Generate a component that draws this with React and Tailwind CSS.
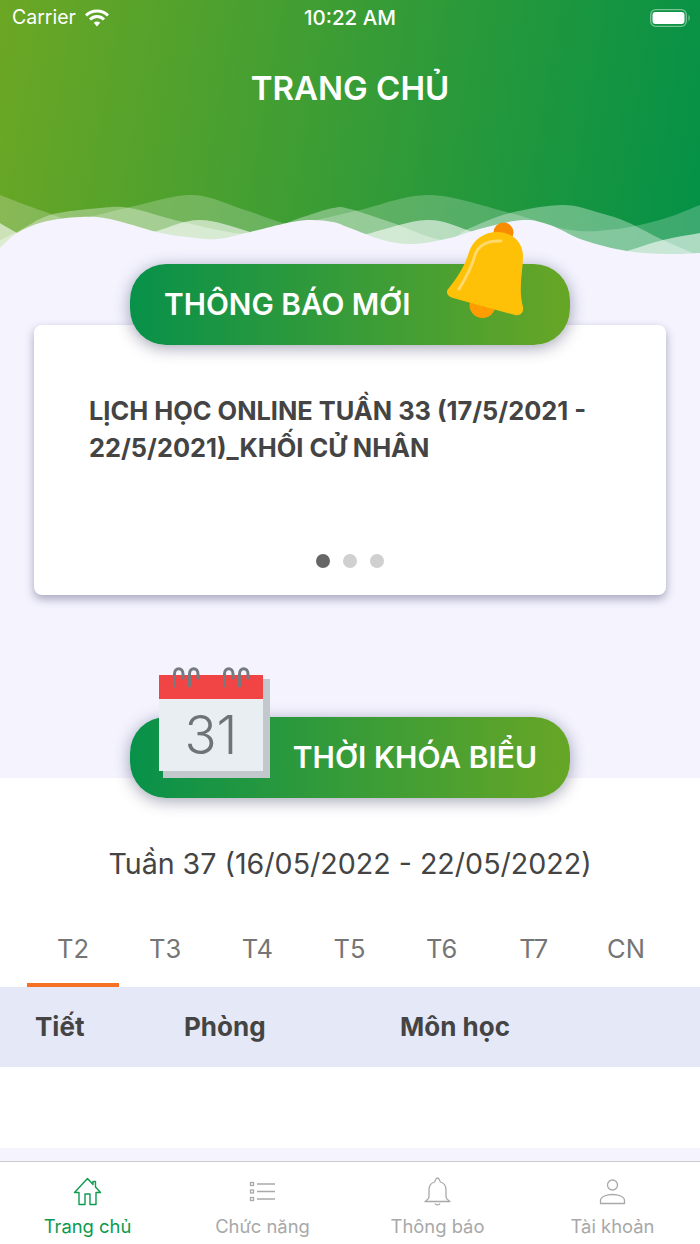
import React from "react";

function smooth(pts) {
  let d = `M${pts[0][0]},${pts[0][1]}`;
  for (let i = 0; i < pts.length - 1; i++) {
    const p0 = pts[i - 1] || pts[i];
    const p1 = pts[i];
    const p2 = pts[i + 1];
    const p3 = pts[i + 2] || p2;
    const c1 = [p1[0] + (p2[0] - p0[0]) / 6, p1[1] + (p2[1] - p0[1]) / 6];
    const c2 = [p2[0] - (p3[0] - p1[0]) / 6, p2[1] - (p3[1] - p1[1]) / 6];
    d += ` C${c1[0].toFixed(1)},${c1[1].toFixed(1)} ${c2[0].toFixed(1)},${c2[1].toFixed(1)} ${p2[0]},${p2[1]}`;
  }
  return d;
}
const closed = (pts, h = 264) => `${smooth(pts)} L${pts[pts.length - 1][0]},${h} L${pts[0][0]},${h} Z`;

const L1 = [[0,195],[40,210],[75,219],[130,207],[193,195],[245,210],[290,224],[325,218],[360,210],[430,195],[510,213],[570,230],[617,229],[663,219],[700,205]];
const L2 = [[-10,245],[17,232],[50,215],[100,208],[130,208],[183,222],[250,234],[297,219],[333,208],[350,209],[393,223],[443,240],[470,228],[510,213],[563,205],[600,213],[627,222],[663,240],[700,256]];
const L3 = [[0,223],[17,233],[60,258],[130,240],[157,231],[200,220],[250,232],[300,250],[363,235],[427,220],[473,232],[530,250],[600,258],[627,251],[663,240],[700,233]];
const MAIN = [[0,248],[17,233],[43,222],[80,217],[110,219],[157,232],[187,237],[217,239],[250,232],[287,223],[310,220],[333,222],[350,228],[383,240],[413,244],[450,238],[483,228],[523,220],[550,225],[583,240],[627,251],[667,254],[700,253]];

function Waves() {
  return (
    <svg className="absolute left-0 top-0" width="700" height="264" viewBox="0 0 700 264">
      <path d={closed(L1)} fill="#fff" fillOpacity="0.22" />
      <path d={closed(L2)} fill="#fff" fillOpacity="0.34" />
      <path d={closed(L3)} fill="#fff" fillOpacity="0.58" />
      <path d={closed(MAIN)} fill="#f4f3fe" />
    </svg>
  );
}

function Bell() {
  return (
    <svg className="absolute left-[315px] top-[-42px]" width="90" height="100" viewBox="0 0 90 100">
      <circle cx="58.5" cy="10.5" r="10" fill="#f88b00" />
      <circle cx="37.5" cy="83" r="13" fill="#ff9d00" />
      <path d="M4,66 C12,56 20,44 24,30 C28,17 40,10 52,10 C67,10 78,20 78,34 C78,50 73,66 78,85 C79,91 75,94 70,93 L8,76 C2,74 0,70 4,66Z" fill="#ffc107" />
      <path d="M14,67 C22,54 27,45 30,33 C33,24 42,18 56,19" fill="none" stroke="#ffda6b" strokeWidth="3" strokeLinecap="round" />
    </svg>
  );
}

function Calendar() {
  return (
    <svg className="absolute left-[29px] top-[-50px]" width="112" height="112" viewBox="0 0 112 112">
      <rect x="4" y="12" width="107" height="99" fill="#c3c8cc" />
      <rect x="0" y="8" width="104" height="96" fill="#e9eef2" />
      <rect x="0" y="8" width="104" height="24" fill="#f14444" />
      {[14, 29, 64, 79].map((x) => (
        <path key={x} d={`M${x + 1.5},19 V7 C${x + 1.5},0 ${x + 10},0 ${x + 10},7 V11`} fill="none" stroke="#757a7e" strokeWidth="3" strokeLinecap="round" />
      ))}
      <text x="52" y="87" textAnchor="middle" fontSize="53" fontWeight="300" fill="#6d7378" fontFamily="Inter, sans-serif">31</text>
    </svg>
  );
}

function StatusBar() {
  return (
    <div className="relative flex h-[36px] items-center justify-between pl-[12px] pr-[9px] text-[19.5px] leading-none text-white">
      <div className="flex items-center gap-[8px]">
        <span>Carrier</span>
        <svg width="26" height="18" viewBox="0 0 26 18">
          <g fill="none" stroke="#fff" strokeWidth="3">
            <path d="M2,6.5 C8,0.5 18,0.5 24,6.5" />
            <path d="M6,10.5 C10,6.5 16,6.5 20,10.5" />
          </g>
          <path d="M9.8,13.8 C11.6,12 14.4,12 16.2,13.8 L13,17.5Z" fill="#fff" />
        </svg>
      </div>
      <span className="absolute left-0 right-0 text-center text-[20.5px] font-medium">10:22 AM</span>
      <svg width="41" height="18" viewBox="0 0 41 18">
        <rect x="0.7" y="0.7" width="35.6" height="16.6" rx="5" fill="none" stroke="#fff" strokeOpacity="0.45" strokeWidth="1.3" />
        <rect x="2.5" y="3" width="32" height="12" rx="3" fill="#fff" />
        <path d="M38.5,6 C40,6.5 40,11.5 38.5,12Z" fill="#fff" fillOpacity="0.5" />
      </svg>
    </div>
  );
}

const tabIconGray = "#a9a9a9";

function HomeIcon() {
  return (
    <svg width="29" height="29" viewBox="0 0 29 29" fill="none" stroke="#0f9a50" strokeWidth="1.4" strokeLinejoin="round">
      <path d="M6,27.5 V15.5 H1.5 L14.5,1.5 L20,7.5 V4.5 H22.5 V10 L27.5,15.5 H23 V27.5 H17 V17 H12 V27.5 Z" />
    </svg>
  );
}
function ListIcon() {
  return (
    <svg width="29" height="29" viewBox="0 0 29 29" fill="none" stroke={tabIconGray} strokeWidth="1.3">
      <rect x="2.5" y="5.5" width="3" height="3" />
      <rect x="2.5" y="13" width="3" height="3" />
      <rect x="2.5" y="20.5" width="3" height="3" />
      <path d="M9,7 H27 M9,14.5 H27 M9,22 H27" />
    </svg>
  );
}
function BellIcon() {
  return (
    <svg width="29" height="29" viewBox="0 0 29 29" fill="none" stroke={tabIconGray} strokeWidth="1.3" strokeLinejoin="round">
      <path d="M14.5,1 C12.5,1 12.5,4 11.5,5 C8,6 6,9 6,13 V20 C6,22 4,23 2,24.5 H27 C25,23 23,22 23,20 V13 C23,9 21,6 17.5,5 C16.5,4 16.5,1 14.5,1 Z" />
      <path d="M12,26.5 C13,28.3 16,28.3 17,26.5" />
    </svg>
  );
}
function UserIcon() {
  return (
    <svg width="29" height="29" viewBox="0 0 29 29" fill="none" stroke={tabIconGray} strokeWidth="1.3">
      <circle cx="14.5" cy="8" r="5" />
      <path d="M2.5,26.5 V23.5 C2.5,19.5 9,17.5 14.5,17.5 C20,17.5 26.5,19.5 26.5,23.5 V26.5 Z" />
    </svg>
  );
}

const navItems = [
  { label: "Trang chủ", Icon: HomeIcon, active: true },
  { label: "Chức năng", Icon: ListIcon },
  { label: "Thông báo", Icon: BellIcon },
  { label: "Tài khoản", Icon: UserIcon },
];

const days = ["T2", "T3", "T4", "T5", "T6", "T7", "CN"];

export default function App() {
  return (
    <div className="flex h-[1244px] w-[700px] flex-col overflow-hidden bg-[#f4f3fe] font-['Inter',sans-serif]">
      <header className="relative h-[264px] shrink-0 bg-[linear-gradient(100deg,#6ca724_0%,#039147_100%)]">
        <Waves />
        <StatusBar />
        <h1 className="relative mt-[30px] text-center text-[33px] font-semibold leading-[44px] text-white">TRANG CHỦ</h1>
      </header>

      <section className="relative z-10 flex shrink-0 flex-col">
        <div className="relative z-10 mx-auto flex h-[81px] w-[440px] items-center rounded-[36px] bg-[linear-gradient(90deg,#08914a,#67a626)] pl-[34px] shadow-[0_3px_16px_rgba(50,50,90,0.45)]">
          <span className="text-[29.8px] font-semibold leading-none text-white">THÔNG BÁO MỚI</span>
          <Bell />
        </div>
        <div className="mx-[34px] mt-[-20px] flex h-[270px] flex-col rounded-lg bg-white px-[55px] pt-[67px] shadow-[0_4px_10px_rgba(50,50,90,0.4)]">
          <p className="text-[25.4px] font-bold leading-[37px] text-[#444444]">
            LỊCH HỌC ONLINE TUẦN 33 (17/5/2021 - 22/5/2021)_KHỐI CỬ NHÂN
          </p>
          <div className="mt-auto mb-[27px] flex justify-center gap-[13px]">
            <span className="h-[14px] w-[14px] rounded-full bg-[#666666]" />
            <span className="h-[14px] w-[14px] rounded-full bg-[#d0d0d0]" />
            <span className="h-[14px] w-[14px] rounded-full bg-[#d0d0d0]" />
          </div>
        </div>
        <div className="relative z-10 mx-auto mb-[-20px] mt-[122px] flex h-[81px] w-[440px] items-center justify-end rounded-[36px] bg-[linear-gradient(90deg,#08914a,#67a626)] pb-[2px] pr-[33px] shadow-[0_3px_16px_rgba(50,50,90,0.45)]">
          <Calendar />
          <span className="text-[30px] font-semibold leading-none text-white">THỜI KHÓA BIỂU</span>
        </div>
      </section>

      <section className="flex h-[370px] shrink-0 flex-col bg-white">
        <p className="mt-[66px] text-center text-[28.6px] leading-[40px] text-[#444444]">Tuần 37 (16/05/2022 - 22/05/2022)</p>
        <div className="mt-[40px] grid h-[63px] grid-cols-7 pl-[27px] pr-[28px]">
          {days.map((d, i) => (
            <div key={d} className={`flex items-center justify-center border-b-[4px] pb-[8px] text-[25.5px] text-[#757575] ${i === 0 ? "border-[#f47125]" : "border-transparent"}`}>
              {d}
            </div>
          ))}
        </div>
        <div className="flex h-[80px] items-center bg-[#e4e8f7] pb-[2px] text-[26px] font-bold text-[#444444]">
          <span className="ml-[35px] w-[149px]">Tiết</span>
          <span className="w-[216px]">Phòng</span>
          <span>Môn học</span>
        </div>
      </section>

      <div className="h-[13px] shrink-0" />

      <nav className="grid h-[83px] shrink-0 grid-cols-4 border-t border-[#c9c9cd] bg-white">
        {navItems.map(({ label, Icon, active }) => (
          <div key={label} className="flex flex-col items-center pt-[15px]">
            <Icon />
            <span className={`mt-[8px] text-[18.4px] leading-[24px] ${active ? "text-[#0a9a4f]" : "text-[#a8a8a8]"}`}>{label}</span>
          </div>
        ))}
      </nav>
    </div>
  );
}
